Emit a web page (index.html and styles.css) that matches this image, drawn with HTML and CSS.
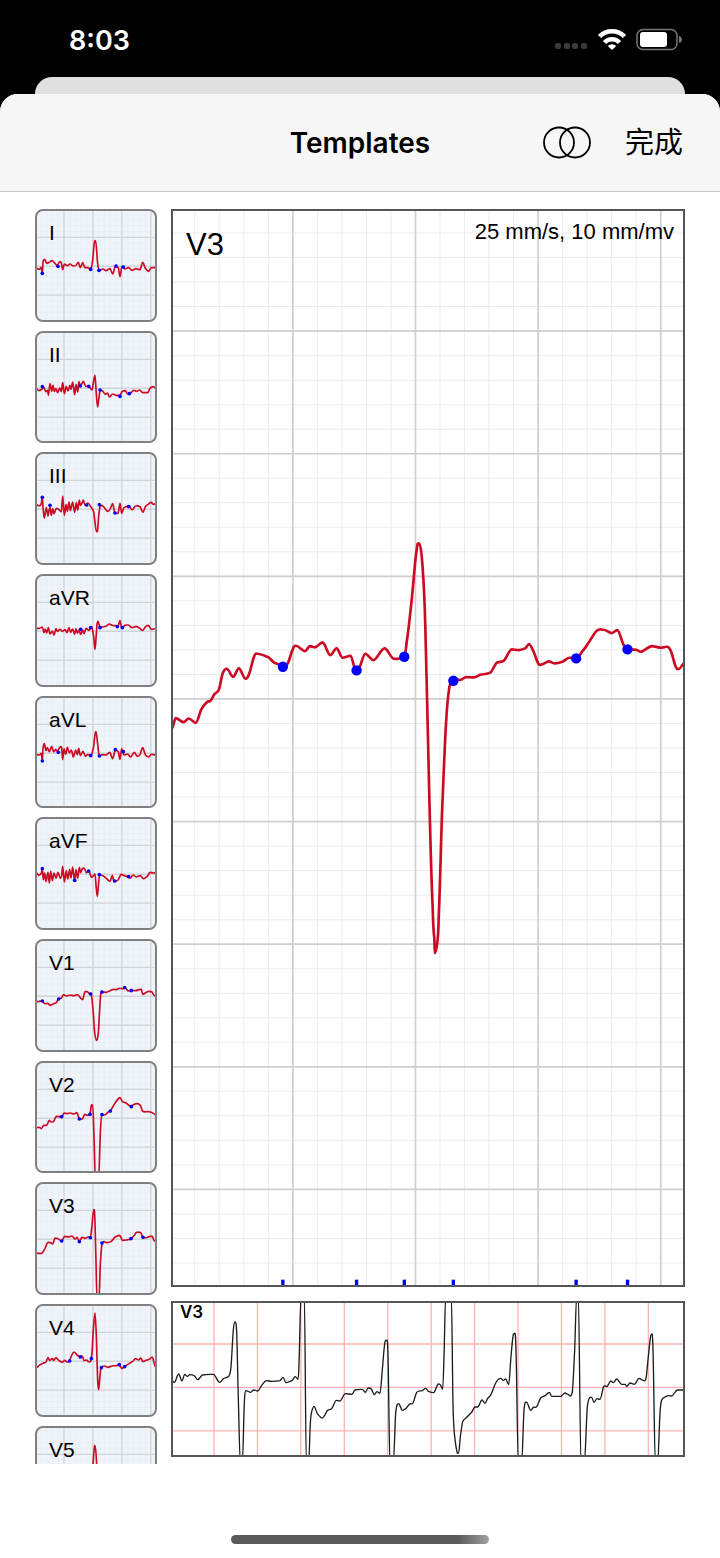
FILE: index.html
```
<!DOCTYPE html>
<html lang="zh-CN">
<head>
    <meta charset="UTF-8">
    <meta name="viewport" content="width=device-width, initial-scale=1.0">
    <title>Templates</title>
    <link rel="stylesheet" href="styles.css">
</head>
<body>
    <div class="status-bar">
        <span class="time">8:03</span>
        <svg class="status-icons" viewBox="0 0 128 24" aria-hidden="true">
            <g fill="#3a3a3c">
                <rect x="0" y="15" width="6" height="6" rx="2"/>
                <rect x="9" y="15" width="6" height="6" rx="2"/>
                <rect x="17" y="15" width="6" height="6" rx="2"/>
                <rect x="26" y="15" width="6" height="6" rx="2"/>
            </g>
            <g fill="none" stroke="#fff" stroke-width="4.500">
                <path d="M44.500 8.500 A17.500 17.500 0 0 1 69.500 8.500"/>
                <path d="M49.500 14.500 A10.500 10.500 0 0 1 64.500 14.500"/>
            </g>
            <path d="M57 22 L52.800 17.900 A6 6 0 0 1 61.200 17.900 Z" fill="#fff"/>
            <rect x="82" y="1.500" width="40" height="20" rx="6" fill="none" stroke="#77777a" stroke-width="1.500"/>
            <rect x="85" y="4" width="27" height="15" rx="3" fill="#fff"/>
            <path d="M124 8 Q127 9 127 11.500 T124 15 Z" fill="#77777a"/>
        </svg>
    </div>

    <div class="back-card"></div>

    <div class="sheet">
        <header class="nav-bar">
            <h1>Templates</h1>
            <div class="nav-actions">
                <button class="icon-button" type="button" aria-label="Overlay">
                    <svg viewBox="0 0 48 34" fill="none" stroke="#000" stroke-width="1.800">
                        <circle cx="16" cy="16.500" r="15"/>
                        <circle cx="32" cy="16.500" r="15"/>
                    </svg>
                </button>
                <button class="done-button" type="button">完成</button>
            </div>
        </header>

        <main class="workspace">
            <nav class="leads" id="leads"></nav>

            <div class="detail">
                <section class="panel chart">
                    <svg id="chart" viewBox="0 0 1530 3219" preserveAspectRatio="xMidYMid slice"></svg>
                    <h2 class="chart-name">V3</h2>
                    <p class="chart-scale">25 mm/s, 10 mm/mv</p>
                </section>
                <section class="panel strip">
                    <svg id="strip" viewBox="0 0 1530 456" preserveAspectRatio="xMidYMid slice"></svg>
                    <h3 class="strip-name">V3</h3>
                </section>
            </div>
        </main>

        <footer class="home-area"><div class="home-indicator"></div></footer>
    </div>

    <script>
        // trace and dots: "x,y x,y ..." in units of a third of a pixel
        const leads = [
            { name: 'I',
              trace: '-3,172 7,175 12,169 16,186 18,152 23,145 29,157 37,154 45,149 54,157 61,164 67,153 73,155 77,176 82,159 91,164 99,159 109,165 117,163 124,154 130,170 137,155 144,170 151,170 162,173 167,147 172,95 176,90 182,157 187,177 199,174 207,179 219,173 227,189 235,167 244,170 249,197 255,165 264,174 275,170 285,178 297,173 309,176 317,154 325,172 335,181 343,170 357,170',
              dots: '16,187 63,166 161,175 186,178 237,165 259,168' },
            { name: 'II',
              trace: '-3,167 6,173 14,169 21,164 27,176 32,172 34,187 39,152 44,175 48,157 52,175 57,167 62,179 68,165 73,176 77,149 82,182 88,160 93,174 99,157 102,169 107,147 113,185 117,155 122,177 126,146 130,161 134,153 139,145 146,160 155,160 165,171 170,144 174,127 178,185 182,222 187,185 190,173 197,174 205,184 212,180 217,192 227,183 239,187 249,187 255,176 265,173 272,183 280,181 290,172 299,175 308,171 317,179 332,179 339,166 348,161 357,165',
              dots: '16,161 130,159 155,160 189,171 249,190 277,182' },
            { name: 'III',
              trace: '-3,152 7,156 13,149 16,128 18,162 22,192 28,160 33,186 36,169 39,160 43,184 47,164 51,179 58,163 65,166 73,173 77,126 82,184 87,152 91,172 96,144 100,170 107,144 113,175 118,146 122,169 127,138 130,154 135,147 139,138 144,154 153,147 160,157 170,173 175,212 178,232 182,228 185,186 190,154 199,157 212,172 219,166 227,149 234,177 244,176 249,148 254,178 260,162 270,157 277,156 285,168 296,156 309,158 318,175 325,158 335,150 342,145 350,151 357,149',
              dots: '16,130 39,154 149,153 187,152 234,177 275,158' },
            { name: 'aVR',
              trace: '-3,157 7,157 16,153 21,170 25,159 29,171 34,155 39,174 46,165 51,177 57,158 61,166 69,160 77,166 84,161 90,170 96,155 101,169 107,159 113,175 117,158 121,171 126,163 131,175 137,162 141,173 147,157 156,163 164,152 170,182 174,220 178,174 180,145 183,136 188,152 196,153 208,150 217,144 226,148 237,149 244,148 249,134 254,156 264,148 274,147 285,155 297,151 307,156 317,163 326,152 334,148 343,160 357,158',
              dots: '131,160 161,155 189,155 241,152 256,155' },
            { name: 'aVL',
              trace: '-3,170 7,171 13,166 16,188 18,151 22,137 27,158 31,149 37,161 44,145 50,162 56,154 62,161 68,148 74,149 77,185 81,152 86,169 91,148 97,165 103,156 109,177 116,156 121,170 125,151 130,173 138,160 145,175 152,170 163,171 170,145 174,110 177,101 182,138 187,174 196,170 207,171 218,163 227,182 235,157 244,161 249,184 254,152 261,171 272,168 281,177 292,163 301,175 309,170 317,149 325,170 335,177 343,169 357,171',
              dots: '16,189 64,163 161,173 187,174 235,155 259,161' },
            { name: 'aVF',
              trace: '-3,161 6,169 13,163 16,150 19,182 23,162 27,188 33,160 37,192 41,157 46,185 51,162 57,178 63,160 70,178 74,170 77,142 82,189 88,155 92,180 98,152 102,177 107,144 113,187 117,152 122,178 127,145 131,161 136,149 141,147 148,161 155,156 164,175 170,169 174,165 178,210 181,232 185,190 188,168 199,171 210,180 219,187 226,169 231,188 243,183 253,166 262,170 271,173 280,177 288,168 298,174 310,170 319,179 332,171 339,160 350,162 357,160',
              dots: '16,149 113,184 155,156 187,167 233,186 275,173' },
            { name: 'V1',
              trace: '-3,182 7,181 16,180 23,188 32,187 40,193 50,188 58,185 65,173 73,171 80,161 88,165 99,162 110,164 121,161 130,170 137,176 144,152 150,152 157,158 163,160 168,205 173,275 179,298 184,275 189,190 192,154 199,153 208,154 219,149 229,145 237,146 247,142 257,143 265,141 274,150 285,148 296,149 306,146 313,145 317,160 325,156 335,151 345,153 352,164 357,163',
              dots: '16,180 65,174 161,159 195,153 263,140 283,149' },
            { name: 'V2',
              trace: '-3,194 7,193 13,197 20,187 29,187 37,172 43,177 50,175 58,160 67,161 74,164 81,150 91,152 100,150 110,153 119,149 128,168 137,167 143,154 151,157 159,151 163,128 167,126 171,220 175,345 185,345 190,210 194,156 203,156 214,147 223,139 231,125 239,113 249,104 256,116 267,120 280,129 292,124 300,122 310,127 317,145 333,146 343,148 357,155',
              dots: '74,161 127,168 159,154 195,155 220,144 283,131' },
            { name: 'V3',
              trace: '-3,208 14,208 24,193 33,175 41,176 47,180 54,162 63,164 74,171 83,157 94,159 105,156 114,165 120,160 127,172 135,160 145,163 153,159 160,161 165,125 169,82 173,90 177,230 180,345 186,345 190,240 195,178 211,176 222,173 233,160 248,154 257,169 268,168 282,165 293,153 299,145 311,146 318,160 328,161 339,157 346,157 352,171 357,170',
              dots: '74,171 127,173 160,161 195,177 282,164 318,160' },
            { name: 'V4',
              trace: '-3,185 7,178 18,172 27,168 33,155 38,163 46,158 50,163 57,155 65,163 76,169 83,163 90,168 97,166 103,150 111,138 120,147 128,151 136,150 141,164 149,162 154,167 161,165 165,140 169,70 174,21 178,90 182,220 185,251 189,210 192,185 203,180 212,184 225,180 238,179 247,177 254,187 264,181 276,173 287,166 296,158 305,162 311,156 318,167 326,163 337,160 346,153 350,166 355,182',
              dots: '98,165 130,153 163,158 193,185 247,176 263,182' },
            { name: 'V5',
              trace: '-3,172 40,165 90,170 150,165 162,165 168,110 172,58 175,55 180,130 186,230 192,182 250,172 300,160 357,172',
              dots: '98,168 162,165 192,182' }
        ];

        const chartTrace = '-3,1552 9,1520 32,1532 48,1521 69,1534 86,1493 103,1472 113,1468 125,1448 138,1435 150,1385 162,1372 181,1396 198,1371 218,1402 229,1387 244,1335 253,1327 288,1338 303,1353 330,1361 344,1357 361,1311 369,1303 397,1319 411,1304 426,1308 449,1293 472,1331 491,1311 509,1339 533,1333 548,1375 558,1371 577,1327 601,1346 635,1311 663,1342 694,1336 701,1292 716,1167 731,1017 739,997 748,1057 757,1247 769,1757 779,2087 784,2182 786,2224 793,2192 797,2117 807,1807 819,1537 829,1427 841,1407 864,1405 879,1397 903,1398 921,1390 953,1383 970,1355 993,1347 1016,1314 1036,1316 1056,1311 1068,1298 1081,1320 1096,1357 1106,1359 1127,1350 1144,1356 1168,1351 1189,1339 1209,1341 1226,1322 1244,1297 1271,1258 1291,1255 1316,1265 1332,1256 1353,1304 1363,1314 1389,1315 1402,1321 1436,1304 1463,1309 1481,1306 1493,1319 1508,1367 1518,1372 1533,1355';
        const chartDots = '330,1366 551,1377 694,1336 841,1408 1209,1341 1363,1314';

        const stripTrace = '-2,235 4,238 17,213 27,234 35,214 43,220 51,215 65,219 74,230 88,216 121,214 140,238 151,227 168,219 174,191 181,81 186,57 191,86 195,251 202,480 208,480 214,301 219,263 233,268 242,261 254,264 266,247 280,233 296,235 321,233 330,223 339,239 358,232 367,221 375,229 378,181 384,-20 394,-20 400,480 407,480 412,361 416,326 423,310 433,332 448,345 464,322 476,317 490,292 501,294 517,272 536,274 546,261 568,259 577,268 585,255 595,258 604,275 612,266 621,271 627,211 635,123 641,113 645,161 651,480 661,480 668,331 677,302 688,322 700,315 710,303 720,300 731,268 748,263 758,256 766,265 782,269 794,245 801,244 809,259 813,161 818,-20 835,-20 840,301 844,391 852,446 857,449 862,401 869,356 881,343 896,328 906,312 914,312 927,291 936,301 944,286 954,274 969,238 983,226 991,232 998,228 1007,245 1014,161 1020,101 1024,92 1029,141 1036,480 1046,480 1053,321 1061,298 1073,322 1081,313 1091,311 1103,285 1116,278 1129,268 1136,280 1163,280 1176,270 1185,274 1198,267 1205,141 1211,-20 1216,-20 1224,480 1234,480 1243,311 1256,283 1263,298 1272,287 1281,289 1292,251 1303,250 1313,234 1321,239 1331,228 1346,244 1356,244 1362,250 1371,240 1384,244 1398,226 1411,232 1419,226 1426,161 1432,106 1435,95 1440,141 1447,480 1454,480 1461,331 1466,291 1478,281 1488,278 1496,279 1513,261 1533,261';

        function toPoints(text) {
            return text.split(' ').map(pair => pair.split(',').map(Number));
        }

        // Smooth curve through all the points
        function curve(text) {
            const p = toPoints(text);
            let d = `M${p[0]}`;
            for (let i = 0; i < p.length - 1; i++) {
                const a = p[i - 1] || p[i];
                const b = p[i];
                const c = p[i + 1];
                const e = p[i + 2] || c;
                // flat tangent at peaks and valleys
                const slopeB = (b[1] - a[1]) * (c[1] - b[1]) > 0 ? (c[1] - a[1]) / 6 : 0;
                const slopeC = (c[1] - b[1]) * (e[1] - c[1]) > 0 ? (e[1] - b[1]) / 6 : 0;
                const third = (c[0] - b[0]) / 3;
                d += `C${b[0] + third},${b[1] + slopeB} ${c[0] - third},${c[1] - slopeC} ${c}`;
            }
            return d;
        }

        function grid(width, height, startX, startY, step, className) {
            let d = '';
            for (let x = startX; x < width; x += step) d += `M${x} 0V${height}`;
            for (let y = startY; y < height; y += step) d += `M0 ${y}H${width}`;
            return `<path class="${className}" d="${d}"/>`;
        }

        function dots(text, r) {
            return toPoints(text).map(p => `<circle class="dot" cx="${p[0]}" cy="${p[1]}" r="${r}"/>`).join('');
        }

        document.getElementById('leads').innerHTML = leads.map(lead => `
            <button class="lead" type="button">
                <svg viewBox="0 0 354 326">
                    ${grid(354, 326, 11.6, 9.6, 17.35, 'minor')}
                    ${grid(354, 326, 81, 79, 86.8, 'major')}
                    <path class="trace" d="${curve(lead.trace)}"/>
                    ${dots(lead.dots, 5.5)}
                </svg>
                <span class="lead-name">${lead.name}</span>
            </button>`).join('');

        document.getElementById('chart').innerHTML =
            grid(1530, 3219, 66, 66, 73.5, 'minor') +
            grid(1530, 3219, 360, 360, 367.5, 'major') +
            `<path class="trace" d="${curve(chartTrace)}"/>` +
            dots(chartDots, 15.5) +
            toPoints(chartDots).map(p => `<rect class="dot" x="${p[0] - 5}" y="3203" width="10" height="16"/>`).join('');

        document.getElementById('strip').innerHTML =
            grid(1530, 456, 123, 123, 130.3, 'pink') +
            `<path class="strip-trace" d="${curve(stripTrace)}"/>`;
    </script>
</body>
</html>
```
FILE: styles.css
```
* {
    box-sizing: border-box;
}
body {
    margin: 0;
    height: 100vh;
    display: flex;
    flex-direction: column;
    background: #000;
    color: #000;
    font-family: Inter, "Noto Sans CJK SC", sans-serif;
}
h1, h2, h3, p {
    margin: 0;
}
button {
    padding: 0;
    border: none;
    background: none;
    color: inherit;
    font-family: inherit;
    cursor: pointer;
}
svg {
    display: block;
}

.status-bar {
    display: flex;
    justify-content: space-between;
    align-items: center;
    height: 77px;
    padding: 3px 37px 0 69px;
    color: #fff;
}
.time {
    font-size: 27px;
    font-weight: 600;
}
.status-icons {
    width: 128px;
    height: 24px;
}
.back-card {
    height: 17px;
    margin: 0 35px;
    border-radius: 17px 17px 0 0;
    background: #e0e0e0;
}

.sheet {
    flex: 1;
    min-height: 0;
    display: flex;
    flex-direction: column;
    border-radius: 18px 18px 0 0;
    background: #fff;
    overflow: hidden;
}
.nav-bar {
    display: grid;
    grid-template-columns: 1fr auto 1fr;
    align-items: center;
    height: 98px;
    padding: 0 37px;
    border-bottom: 1px solid #c8c8ca;
    background: #f6f6f6;
}
.nav-bar h1 {
    grid-column: 2;
    font-size: 28px;
    font-weight: 600;
}
.nav-actions {
    display: flex;
    justify-content: flex-end;
    align-items: center;
    gap: 34px;
}
.icon-button svg {
    width: 48px;
    height: 34px;
}
.done-button {
    font-size: 29px;
    line-height: 40px;
}

.workspace {
    flex: 1;
    min-height: 0;
    display: flex;
    gap: 14px;
    padding: 17px 35px 0;
}
.leads {
    width: 122px;
    display: flex;
    flex-direction: column;
    gap: 9px;
    overflow: hidden;
}
.lead {
    position: relative;
    flex-shrink: 0;
    border: 2px solid #808080;
    border-radius: 8px;
    background: #eff4fa;
    overflow: hidden;
}
.lead svg {
    width: 100%;
}
.lead-name {
    position: absolute;
    left: 12px;
    top: 10px;
    font-family: "Liberation Sans", sans-serif;
    font-size: 21px;
    line-height: 24px;
}

.detail {
    flex: 1;
    min-width: 0;
    display: flex;
    flex-direction: column;
    gap: 14px;
    padding-bottom: 7px;
}
.panel {
    position: relative;
    border: 2px solid #555;
}
.panel svg {
    width: 100%;
    height: 100%;
}
.chart {
    flex: 1;
    min-height: 0;
}
.strip {
    height: 156px;
}
.chart-name {
    position: absolute;
    left: 13px;
    top: 16px;
    font-family: "Liberation Sans", sans-serif;
    font-size: 31px;
    font-weight: 400;
    line-height: 36px;
}
.chart-scale {
    position: absolute;
    right: 9px;
    top: 8px;
    font-family: "Liberation Sans", sans-serif;
    font-size: 22px;
    line-height: 26px;
}
.strip-name {
    position: absolute;
    left: 7px;
    top: 0;
    font-size: 17px;
    font-weight: 600;
    line-height: 18px;
}

.minor, .major, .pink, .trace, .strip-trace {
    fill: none;
}
.minor {
    stroke: #e8edf2;
    stroke-width: 2;
}
.major {
    stroke: #d2d5d8;
    stroke-width: 4;
}
.chart .minor {
    stroke: #ebebeb;
    stroke-width: 3;
}
.chart .major {
    stroke: #cfcfcf;
    stroke-width: 5;
}
.pink {
    stroke: #ffb3b3;
    stroke-width: 4;
}
.trace {
    stroke: #cc0a24;
    stroke-width: 5;
    stroke-linejoin: round;
}
.chart .trace {
    stroke-width: 8;
}
.strip-trace {
    stroke: #1c1c1c;
    stroke-width: 4;
}
.dot {
    fill: #0000ff;
}

.home-area {
    display: flex;
    justify-content: center;
    height: 94px;
    padding-top: 71px;
}
.home-indicator {
    width: 258px;
    height: 9px;
    border-radius: 5px;
    background: linear-gradient(90deg, #5a5a5a, #5a5a5a 88%, #a0a0a0);
}
```
